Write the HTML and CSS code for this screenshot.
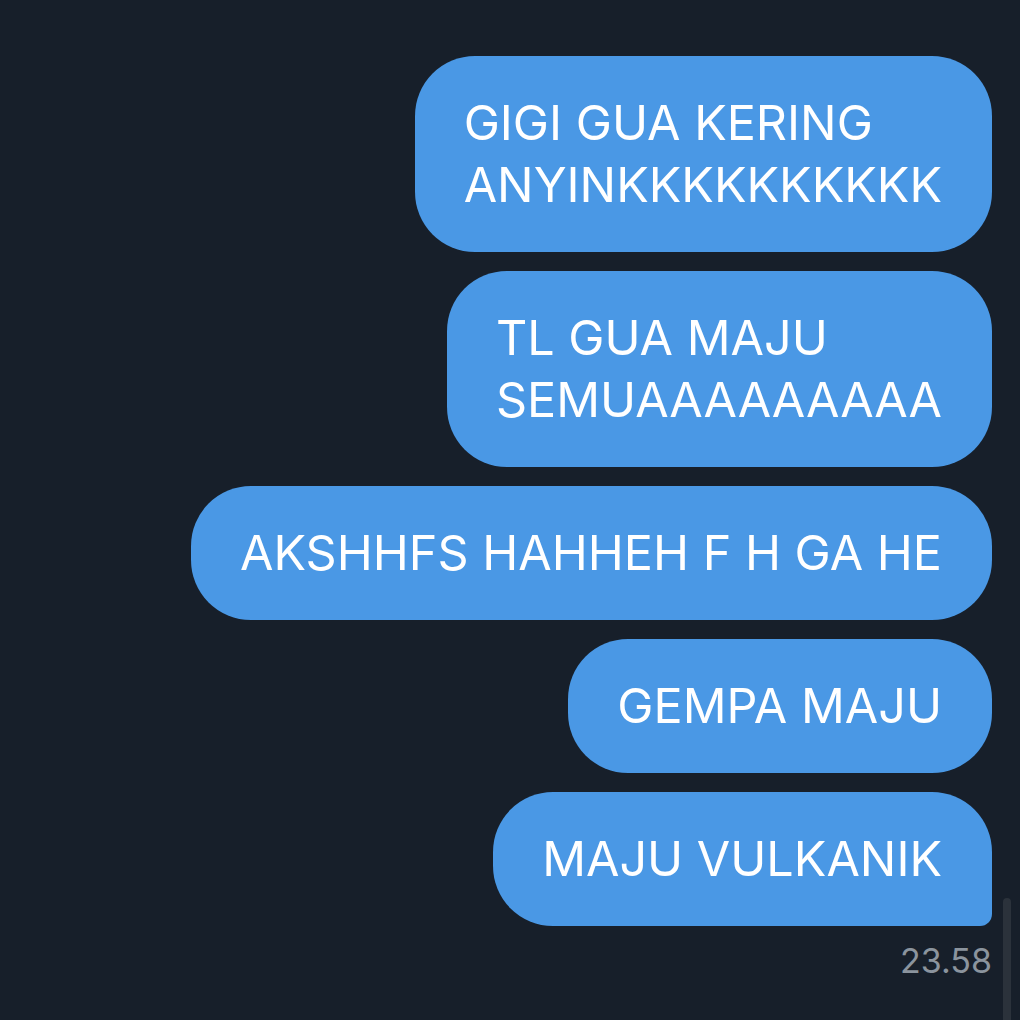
FILE: index.html
```html
<!DOCTYPE html>
<html>
<head>
<meta charset="utf-8">
<link rel="stylesheet" href="styles.css">
</head>
<body>
<div class="chat">
  <div class="bubble">GIGI GUA KERING<br>ANYINKKKKKKKKKK</div>
  <div class="bubble">TL GUA MAJU<br>SEMUAAAAAAAAA</div>
  <div class="bubble">AKSHHFS HAHHEH F H GA HE</div>
  <div class="bubble">GEMPA MAJU</div>
  <div class="bubble last">MAJU VULKANIK</div>
  <div class="time">23.58</div>
</div>
<div class="scrollbar"></div>
</body>
</html>
```

FILE: styles.css
```css
html, body {
  margin: 0;
  padding: 0;
  background: #171f2a;
  height: 100%;
  overflow: hidden;
}
body {
  font-family: "Inter", "Liberation Sans", sans-serif;
  position: relative;
}
.chat {
  display: flex;
  flex-direction: column;
  align-items: flex-end;
  gap: 19px;
  padding: 56px 28px 0 0;
}
.bubble {
  background: #4a98e5;
  color: #ffffff;
  font-size: 48.5px;
  line-height: 62px;
  padding: 36px 50px 36px 49px;
  border-radius: 60px;
  white-space: nowrap;
}
.bubble.last {
  border-bottom-right-radius: 12px;
}
.time {
  margin-top: -4px;
  color: #8b949e;
  font-size: 34px;
  line-height: 40px;
}
.scrollbar {
  position: absolute;
  left: 1003px;
  top: 898px;
  width: 8px;
  height: 140px;
  border-radius: 4px;
  background: #2b323b;
}
```
